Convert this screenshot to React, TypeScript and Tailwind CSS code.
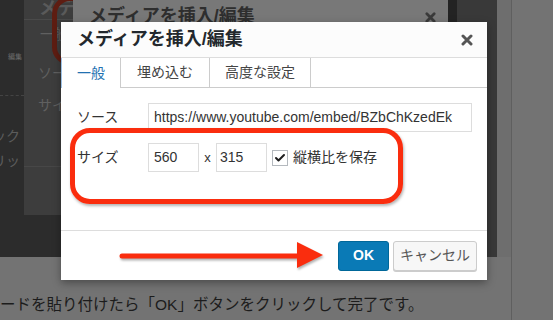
import { Check } from "lucide-react";

const font = "font-['Liberation_Sans','Noto_Sans_CJK_JP',sans-serif]";

function CloseX({ color, size }: { color: string; size: number }) {
  return (
    <svg width={size} height={size} viewBox="0 0 12 12">
      <path d="M2 2L10 10M10 2L2 10" stroke={color} strokeWidth="3" strokeLinecap="round" />
    </svg>
  );
}

function BehindPage() {
  return (
    <div className="flex h-[320px] w-[553px] bg-[#737373]">
      <div className="flex w-[511px] flex-col">
        {/* old screenshot area */}
        <div className="flex h-[257px] bg-[#2c2c2c]">
          <div className="flex w-[24px] flex-col overflow-hidden whitespace-nowrap text-[#5c5c5c]">
            <div className="mt-[52px] pl-[8px] text-[7px] text-[#6a6a6a]">編集</div>
            <div className="mt-[32px] border-t border-dashed border-[#444]" />
            <div className="ml-[-8px] mt-[30px] text-[14px]">ック</div>
            <div className="ml-[-8px] mt-[4px] text-[14px]">リッ</div>
          </div>
          <div className="relative w-[49px]">
            <div className="flex h-[215px] flex-col overflow-hidden whitespace-nowrap bg-[#3d3d3d] text-[#606060]">
              <div className="h-[20px] border-b border-[#4a4a4a] pl-[15px] text-[18px] font-bold leading-[16px] text-[#5a5a5a]">
                メディア
              </div>
              <div className="mt-[4px] pl-[16px] text-[14px]">一般</div>
              <div className="mt-[18px] pl-[14px] text-[14px]">ソース</div>
              <div className="mt-[11px] pl-[14px] text-[14px]">サイズ</div>
              <div className="mt-[50px] border-t border-[#474747]" />
            </div>
            {/* dim red mark from an older shot */}
            <div className="absolute left-[28px] top-[-4px] h-[69px] w-[50px] rounded-[18px] border-[5px] border-[#5e1d12]" />
          </div>
          <div className="relative flex h-[60px] w-[375px] items-start justify-between bg-[#787878] px-[16px] pt-[3px]">
            <span className="text-[18px] font-bold text-[#2e2e2e]">メディアを挿入/編集</span>
            <span className="mr-[-4px] mt-[9px]">
              <CloseX color="#3a3a3a" size={11} />
            </span>
          </div>
          <div className="w-[9px] bg-[#232323]" />
          <div className="w-[40px] bg-[#393939]" />
          <div className="flex-1 bg-[#6e6e6e]" />
        </div>
        <div className="flex-1 overflow-hidden whitespace-nowrap bg-[#737373] pt-[39px] text-[15.5px] leading-[18px] text-[#1c1c1c]">
          ードを貼り付けたら「OK」ボタンをクリックして完了です。
        </div>
      </div>
      <div className="w-px bg-[#5f5f5f]" />
      <div className="flex-1 bg-[#737373]" />
    </div>
  );
}

function Dialog() {
  return (
    <div className="absolute left-[61px] top-[22px] flex h-[258px] w-[426px] flex-col bg-white shadow-[0_3px_8px_rgba(0,0,0,0.35)]">
      <div className="flex h-[36px] items-center justify-between border-b border-[#dddddd] bg-[#fcfcfc] pl-[16px] pr-[14px]">
        <span className="text-[18px] font-bold text-[#23282d]">メディアを挿入/編集</span>
        <CloseX color="#555555" size={12} />
      </div>
      <div className="flex h-[30px] border-b border-[#cccccc] text-[14px]">
        <div className="mb-[-1px] flex items-center border-l border-r border-l-[#9ec2e6] border-r-[#cccccc] bg-white px-[15px] text-[#2271b1]">
          一般
        </div>
        <div className="flex items-center border-r border-[#cccccc] px-[16px] text-[#444]">埋め込む</div>
        <div className="flex items-center border-r border-[#cccccc] px-[15px] text-[#444]">高度な設定</div>
      </div>
      <div className="flex flex-1 flex-col gap-[11px] pl-[16px] pr-[15px] pt-[15px] text-[14px] text-[#333]">
        <div className="flex h-[29px] items-center">
          <span className="w-[71px]">ソース</span>
          <div className="flex h-[29px] flex-1 items-center border border-[#dddddd] pl-[5px] text-[#333]">
            https://www.youtube.com/embed/BZbChKzedEk
          </div>
        </div>
        <div className="flex h-[29px] items-center">
          <span className="w-[71px]">サイズ</span>
          <div className="flex h-[29px] w-[51px] items-center border border-[#dddddd] pl-[5px]">560</div>
          <span className="w-[17px] text-center text-[13px]">x</span>
          <div className="flex h-[29px] w-[51px] items-center border border-[#dddddd] pl-[3px]">315</div>
          <div className="ml-[5px] flex h-[16px] w-[16px] items-center justify-center border border-[#b4b9be] bg-white">
            <Check size={12} strokeWidth={4} className="text-[#1e1e1e]" />
          </div>
          <span className="ml-[5px]">縦横比を保存</span>
        </div>
      </div>
      <div className="flex h-[50px] items-center justify-end gap-[4px] border-t border-[#dddddd] pr-[10px] text-[14px]">
        <div className="flex h-[30px] w-[51px] items-center justify-center rounded-[3px] border border-[#006799] bg-[#0a7ab6] font-bold text-white">
          OK
        </div>
        <div className="flex h-[30px] w-[84px] items-center justify-center rounded-[3px] border border-[#cccccc] bg-[#f7f7f7] text-[#555] shadow-[0_1px_0_#ccc]">
          キャンセル
        </div>
      </div>
    </div>
  );
}

export default function App() {
  return (
    <div className={`relative h-[320px] w-[553px] overflow-hidden ${font}`}>
      <BehindPage />
      <Dialog />
      {/* annotation: red box */}
      <div className="absolute left-[70px] top-[128px] h-[76px] w-[333px] rounded-[20px] border-[5px] border-[#fa2d0e] shadow-[1px_2px_3px_rgba(0,0,0,0.3)]" />
      {/* annotation: arrow */}
      <svg className="absolute left-[115px] top-[238px] drop-shadow-[1px_2px_1px_rgba(0,0,0,0.3)]" width="212" height="34" viewBox="0 0 212 34">
        <line x1="7" y1="18" x2="188" y2="18" stroke="#fa2d0e" strokeWidth="5" strokeLinecap="round" />
        <polygon points="182,4 208,17 182,30" fill="#fa2d0e" />
      </svg>
    </div>
  );
}
